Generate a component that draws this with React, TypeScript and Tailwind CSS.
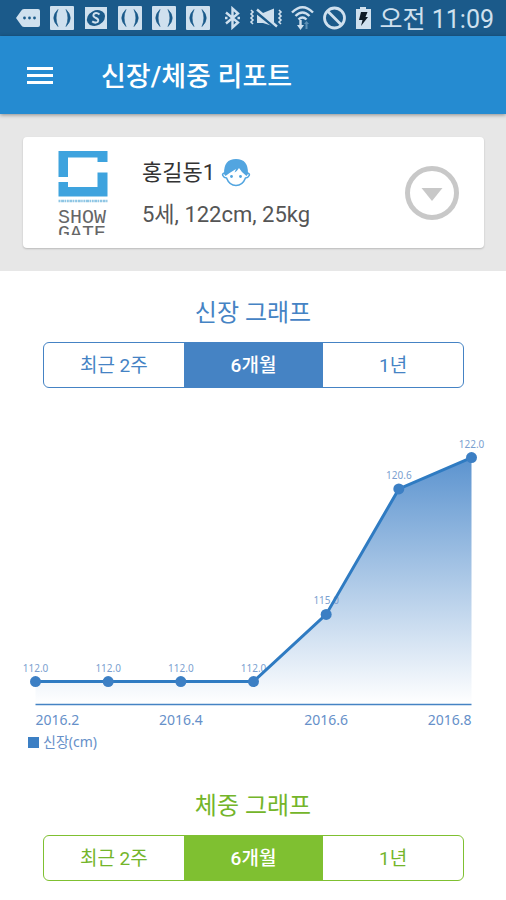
import { useState } from 'react'
import { clsx } from 'clsx'

const periods = ['최근 2주', '6개월', '1년']

const heights = [
  { month: '2016.2', value: 112 },
  { month: '2016.3', value: 112 },
  { month: '2016.4', value: 112 },
  { month: '2016.5', value: 112 },
  { month: '2016.6', value: 115 },
  { month: '2016.7', value: 120.6 },
  { month: '2016.8', value: 122 },
]

function ParenIcon() {
  return (
    <svg width="24" height="24" viewBox="0 0 24 24" fill="none">
      <rect width="24" height="24" rx="1" fill="#cfe0ee" />
      <path d="M8 3.5Q-0.5 12 8 20.5Q4.2 12 8 3.5Z" fill="#1b5a8a" stroke="#1b5a8a" strokeWidth="0.6" />
      <path d="M16 3.5Q24.5 12 16 20.5Q19.8 12 16 3.5Z" fill="#1b5a8a" stroke="#1b5a8a" strokeWidth="0.6" />
    </svg>
  )
}

function StatusBar() {
  return (
    <div className="flex h-9 items-center justify-between bg-[#1b5a8a] pl-4 pr-3 text-[#cfe0ee]">
      <div className="flex items-center gap-[10px]">
        <svg width="24" height="24" viewBox="0 0 24 24">
          <path d="M8 3H22Q24 3 24 5V19Q24 21 22 21H8Q6 21 5 19L0 12L5 5Q6 3 8 3Z" fill="currentColor" />
          <g fill="#1b5a8a">
            <circle cx="8.5" cy="12" r="1.4" />
            <circle cx="13.5" cy="12" r="1.4" />
            <circle cx="18.5" cy="12" r="1.4" />
          </g>
        </svg>
        <ParenIcon />
        <svg width="24" height="24" viewBox="0 0 24 24" fill="none">
          <rect x="1" y="1" width="22" height="22" fill="currentColor" />
          <ellipse cx="12" cy="12" rx="9.5" ry="7.5" transform="rotate(-28 12 12)" fill="#1b5a8a" />
          <path d="M15.5 8.5Q12.500 6 10 7.800Q8 10.4 12 12Q15.500 13.6 13.6 16Q11 17.5 8.200 15.4" stroke="currentColor" strokeWidth="2" />
        </svg>
        <ParenIcon />
        <ParenIcon />
        <ParenIcon />
      </div>
      <div className="flex items-center gap-2">
        <svg width="17" height="24" viewBox="0 0 17 24" fill="none" stroke="currentColor" strokeWidth="2.4">
          <path d="M2 6.5L14 16.5L8.5 21.5V2.5L14 7.5L2 17.5" />
          <path d="M1 12H3.5M13.5 12H16" />
        </svg>
        <svg width="34" height="24" viewBox="0 0 34 24" fill="none" stroke="currentColor">
          <path d="M2 4L4 6L2 8L4 10L2 12L4 14L2 16L4 18" strokeWidth="1.6" />
          <path d="M30 4L32 6L30 8L32 10L30 12L32 14L30 16L32 18" strokeWidth="1.6" />
          <path d="M8 7H14L25 2.5V20.5L14 17H8Z" fill="currentColor" stroke="none" />
          <path d="M6 5L27 22" stroke="#1b5a8a" strokeWidth="3" />
          <path d="M8 3.5L28 20.5" strokeWidth="2.4" />
        </svg>
        <svg width="23" height="26" viewBox="0 0 23 26" fill="none" stroke="currentColor" strokeWidth="2.4">
          <path d="M1 7.5Q11.5 -3 22 7.5" />
          <path d="M4.5 11Q11.5 4 18.5 11" />
          <path d="M7.5 14.5Q11.5 10.5 15.5 14.5" />
          <path d="M9.5 15V21" />
          <path d="M6 20H13L9.5 25Z" fill="currentColor" stroke="none" />
          <path d="M13 19L15.5 16L18 19H16.5V24H14.5V19Z" fill="#5d90b6" stroke="none" />
        </svg>
        <svg width="25" height="24" viewBox="0 0 25 24" fill="none" stroke="currentColor" strokeWidth="2.8">
          <circle cx="12.5" cy="12" r="10" />
          <path d="M5.5 5L19.5 19" />
        </svg>
        <svg width="17" height="24" viewBox="0 0 17 24">
          <path d="M5 1H11V3H16V23H1V3H5Z" fill="currentColor" />
          <path d="M6 6H12.5L10.5 11H13L6 20L7.5 14H4Z" fill="#0c1a26" />
        </svg>
        <span className="pt-[3px] text-[25px] leading-8">오전 11:09</span>
      </div>
    </div>
  )
}

function ShowGateLogo() {
  return (
    <div className="h-[85px] w-[50px] shrink-0 overflow-hidden">
      <svg width="50" height="54" viewBox="0 0 50 54">
        <path d="M0.5 1H49.5V12H39.5V7.5H10V27H0.5Z" fill="#3ea3de" />
        <path d="M0.5 32H10V37H39.5V22.5H49.5V46.5H0.5Z" fill="#3ea3de" />
        <path d="M0.5 51H49.5" stroke="#8fc6e4" strokeWidth="2.5" strokeDasharray="2 0.6 3 0.5 1.5 0.7" />
      </svg>
      <p className="mt-1.5 font-['Liberation_Mono',monospace] text-[20px] leading-4 text-[#666666]">
        SHOW
        <br />
        GATE
      </p>
    </div>
  )
}

function ChildIcon() {
  return (
    <svg width="30" height="30" viewBox="0 0 30 30" fill="none">
      <path d="M4.5 14.5Q0.8 15.5 1.800 17.5Q3 20 5.5 20Q8.5 27.5 15 27.5Q21.5 27.5 24.5 20Q27 20 28.200 17.5Q29.2 15.5 25.5 14.5" fill="#fff" stroke="#52a5e0" strokeWidth="1.6" />
      <path d="M3 16Q2.500 1 15 1Q27.500 1 27 16L25.5 18Q20.5 14.5 18 10Q16 13.5 13.5 14.5L15 11Q9 14.5 4.5 18Z" fill="#52a5e0" />
      <circle cx="10.5" cy="18.500" r="1.4" fill="#52a5e0" />
      <circle cx="19.5" cy="18.500" r="1.4" fill="#52a5e0" />
    </svg>
  )
}

function PeriodTabs({ label, green }: { label: string; green?: boolean }) {
  const [active, setActive] = useState(1)

  return (
    <div
      role="group"
      aria-label={label}
      className={clsx(
        'ml-[43px] mr-[42px] grid h-[46px] grid-cols-3 overflow-hidden rounded-md border',
        green ? 'border-[#7fc031]' : 'border-[#4583c4]'
      )}
    >
      {periods.map((period, i) => (
        <button
          key={period}
          type="button"
          aria-pressed={active === i}
          onClick={() => setActive(i)}
          className={clsx(
            'pt-[3px] text-[19px]',
            active === i && 'font-medium text-white',
            active === i && (green ? 'bg-[#7fc031]' : 'bg-[#4583c4]'),
            active !== i && (green ? 'text-[#74b52a]' : 'text-[#4583c4]')
          )}
        >
          {period}
        </button>
      ))}
    </div>
  )
}

function HeightChart() {
  const points = heights.map((h, i) => ({
    ...h,
    x: 35.5 + (i * 436) / 6,
    y: 274 - (h.value - 111) * 22.4,
  }))
  const line = points.map((p) => `${p.x},${p.y}`).join(' ')

  return (
    <svg viewBox="0 0 506 300" className="block w-full font-['Noto_Sans',sans-serif]" role="img" aria-label="신장 그래프">
      <defs>
        <linearGradient id="area" x1="0" y1="0" x2="0" y2="1">
          <stop offset="0" stopColor="#5b93cf" />
          <stop offset="1" stopColor="#ffffff" />
        </linearGradient>
      </defs>
      <polygon points={`35.5,274 ${line} 471.5,274`} fill="url(#area)" />
      <path d="M35.5 274.5H471.5" stroke="#4583c4" strokeWidth="1.5" />
      {points.map((p) => (
        <text key={p.month} x={p.x} y={p.y - 10} textAnchor="middle" fontSize="10" fill="#7b9fd0">
          {p.value.toFixed(1)}
        </text>
      ))}
      <polyline points={line} fill="none" stroke="#2f7bc2" strokeWidth="3" />
      {points.map((p) => (
        <circle key={p.month} cx={p.x} cy={p.y} r="5.5" fill="#3c7fc4" />
      ))}
      {points.map((p, i) => {
        if (i % 2) return null
        const anchor = i === 0 ? 'start' : i === points.length - 1 ? 'end' : 'middle'
        return (
          <text key={p.month} x={p.x} y="295" textAnchor={anchor} fontSize="14" fill="#6690c9">
            {p.month}
          </text>
        )
      })}
    </svg>
  )
}

export default function App() {
  return (
    <div className="min-h-screen bg-white font-[Roboto,'Noto_Sans_CJK_KR',sans-serif]">
      <StatusBar />
      <header className="relative flex h-[78px] items-center bg-[#258bd1] px-[27px] text-white shadow-[0_1px_4px_rgba(0,0,0,0.4)]">
        <button type="button" aria-label="메뉴" className="flex w-[26px] flex-col gap-1">
          <span className="h-[3px] bg-white" />
          <span className="h-[3px] bg-white" />
          <span className="h-[3px] bg-white" />
        </button>
        <h1 className="ml-12 pt-[3px] text-[27px] font-medium leading-9">신장/체중 리포트</h1>
      </header>

      <section className="bg-[#e7e7e7] py-[23px] pl-[23px] pr-[22px]">
        <div className="flex h-[111px] items-center rounded bg-white pl-[35px] pr-[25px] shadow-[0_1px_2px_rgba(0,0,0,0.2)]">
          <ShowGateLogo />
          <div className="ml-[34px] flex-1 pt-[3px]">
            <p className="flex items-center gap-1.5 text-[22px] leading-10 text-[#333333]">
              홍길동1
              <ChildIcon />
            </p>
            <p className="mt-0.5 text-[22px] leading-10 text-[#555555]">5세, 122cm, 25kg</p>
          </div>
          <button type="button" aria-label="아이 선택">
            <svg width="54" height="54" viewBox="0 0 54 54">
              <circle cx="27" cy="27" r="24.5" fill="none" stroke="#c8c8c8" strokeWidth="5" />
              <path d="M16.5 22H37.5L27 35Z" fill="#c8c8c8" />
            </svg>
          </button>
        </div>
      </section>

      <section className="pt-6">
        <h2 className="mb-[11px] text-center text-2xl leading-9 text-[#4583c4]">신장 그래프</h2>
        <PeriodTabs label="신장 기간" />
        <div className="mt-[42px]">
          <HeightChart />
        </div>
        <p className="ml-7 flex items-center gap-1 font-['Noto_Sans','Noto_Sans_CJK_KR',sans-serif] text-[14px] leading-6 text-[#6690c9]">
          <span className="size-[11px] bg-[#3c7fc4]" />
          신장(cm)
        </p>
      </section>

      <section className="pb-5 pt-[34px]">
        <h2 className="mb-[11px] text-center text-2xl leading-9 text-[#74b52a]">체중 그래프</h2>
        <PeriodTabs label="체중 기간" green />
      </section>
    </div>
  )
}
